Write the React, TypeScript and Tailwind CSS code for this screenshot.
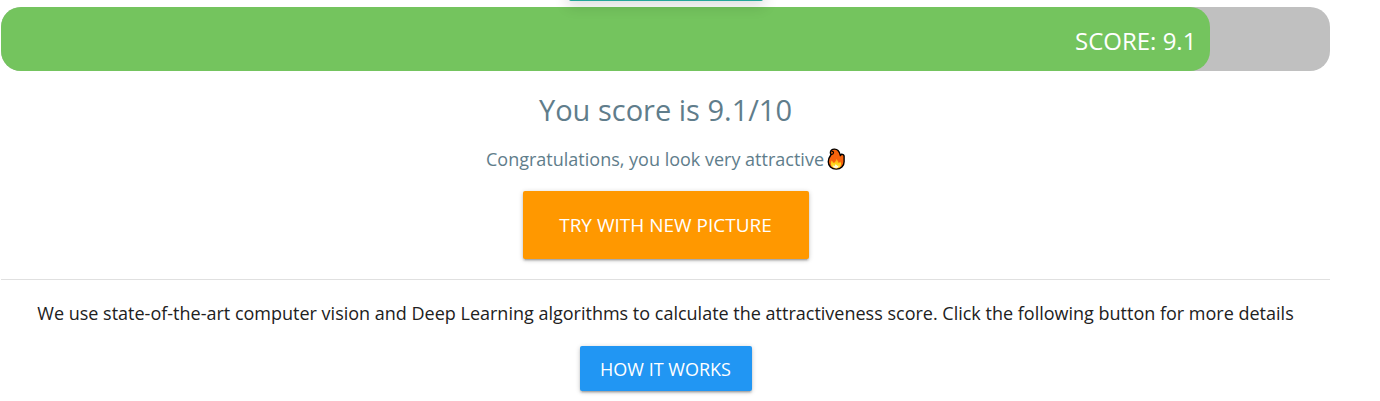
import React from 'react';

const SCORE = 9.1;

const raised = 'shadow-[0_2px_2px_0_rgba(0,0,0,0.14),0_3px_1px_-2px_rgba(0,0,0,0.12),0_1px_5px_0_rgba(0,0,0,0.2)]';

const FlameIcon: React.FC<{ className?: string }> = ({ className }) => (
  <svg viewBox="0 0 18 22" className={className} role="img" aria-label="fire">
    <defs>
      <linearGradient id="flame-core" x1="0" y1="0" x2="0" y2="1">
        <stop offset="0" stopColor="#ff9a1a" />
        <stop offset="0.5" stopColor="#ffd51a" />
        <stop offset="1" stopColor="#ffe94a" />
      </linearGradient>
    </defs>
    <path
      d="M4.500 2.100C6 .7 9.200.7 11 2.600c1.500 1.600 2.100 3.300 2.400 5 .5-.4.8-.9.9-1.500 1.700.1 2.700.7 2.800 2v5.700c0 4.300-3.200 7.300-7.800 7.300-4.900 0-8-3.100-8-7.300 0-2.900 1.200-5.100 2.800-7.300-1.100-1.100-.9-3.300.4-4.400z"
      fill="#f7630c"
      stroke="#000"
      strokeWidth="1.400"
      strokeLinejoin="round"
    />
    <path d="M4.300 12.600c1 .5 1.900 1.500 2.300 2.500 1.400-.8 2.400-2.100 2.600-4.200 1.600 1.200 2.300 2.800 2.400 4.200.7-.3 1.200-.8 1.600-1.500.9 1.200 1.100 2.300.8 3.500-.6 2.100-2.300 3.300-4.700 3.300-2.900 0-4.900-1.300-5.300-3.800-.2-1.300-.1-2.700.3-4z" fill="url(#flame-core)" />
    <path d="M6 17.500c.6.100 1 .3 1.400.7.500-.5.900-1.100 1.100-1.900 1 .5 1.500 1.100 1.800 1.800.4-.2.700-.3 1.100-.3.100 1.300-.9 2.300-2.400 2.300-1.700 0-2.900-1-3-2.600z" fill="#fffbe0" />
    <path d="M4.200 6.500c1.200-.1 2.200-.8 2.300-1.800.1-.9-.5-1.400-1.300-1.300" fill="none" stroke="#000" strokeWidth="1.200" strokeLinecap="round" />
  </svg>
);

const ScoreBar: React.FC<{ score: number }> = ({ score }) => (
  <div className="w-full rounded-[20px] bg-[#c0c0c0]">
    <div
      className="flex h-16 items-center justify-end rounded-[20px] bg-[#74c45e] pr-[14px] pt-1 text-2xl text-white"
      style={{ width: `${score * 10}%` }}
    >
      SCORE: {score}
    </div>
  </div>
);

const App: React.FC = () => (
  <main className="pl-px pr-[50px] font-['Open_Sans','Noto_Sans',sans-serif] text-lg text-[#212121]">
    {/* lower edge of the upload control above the results */}
    <div className="flex h-[7px] items-end justify-center pb-[6px]">
      <div className="relative h-11 w-[194px] shrink-0 rounded-[2px] bg-[#26a69a] shadow-[0_4px_14px_2px_rgba(0,0,0,0.12)]" />
    </div>

    <ScoreBar score={SCORE} />

    <section className="flex flex-col items-center border-b border-[#e0e0e0] pb-5 text-[#607d8b]">
      <h1 className="mt-5 text-[29px] leading-[38px]">You score is {SCORE}/10</h1>
      <p className="mt-[18px] flex items-center gap-[3px] leading-6">
        Congratulations, you look very attractive
        <FlameIcon className="h-[22px] w-[18px]" />
      </p>
      <button type="button" className={`mt-5 h-[68px] w-[286px] rounded-[2px] bg-[#ff9800] pt-0.5 text-[19px] text-white ${raised}`}>
        TRY WITH NEW PICTURE
      </button>
    </section>

    <section className="flex flex-col items-center pb-2.5 pt-5">
      <p className="text-center leading-[26px]">
        We use state-of-the-art computer vision and Deep Learning algorithms to calculate the attractiveness score. Click the following button for more details
      </p>
      <button type="button" className={`mt-5 h-[45px] w-[172px] rounded-[2px] bg-[#2196f3] text-white ${raised}`}>
        HOW IT WORKS
      </button>
    </section>
  </main>
);

export default App;
